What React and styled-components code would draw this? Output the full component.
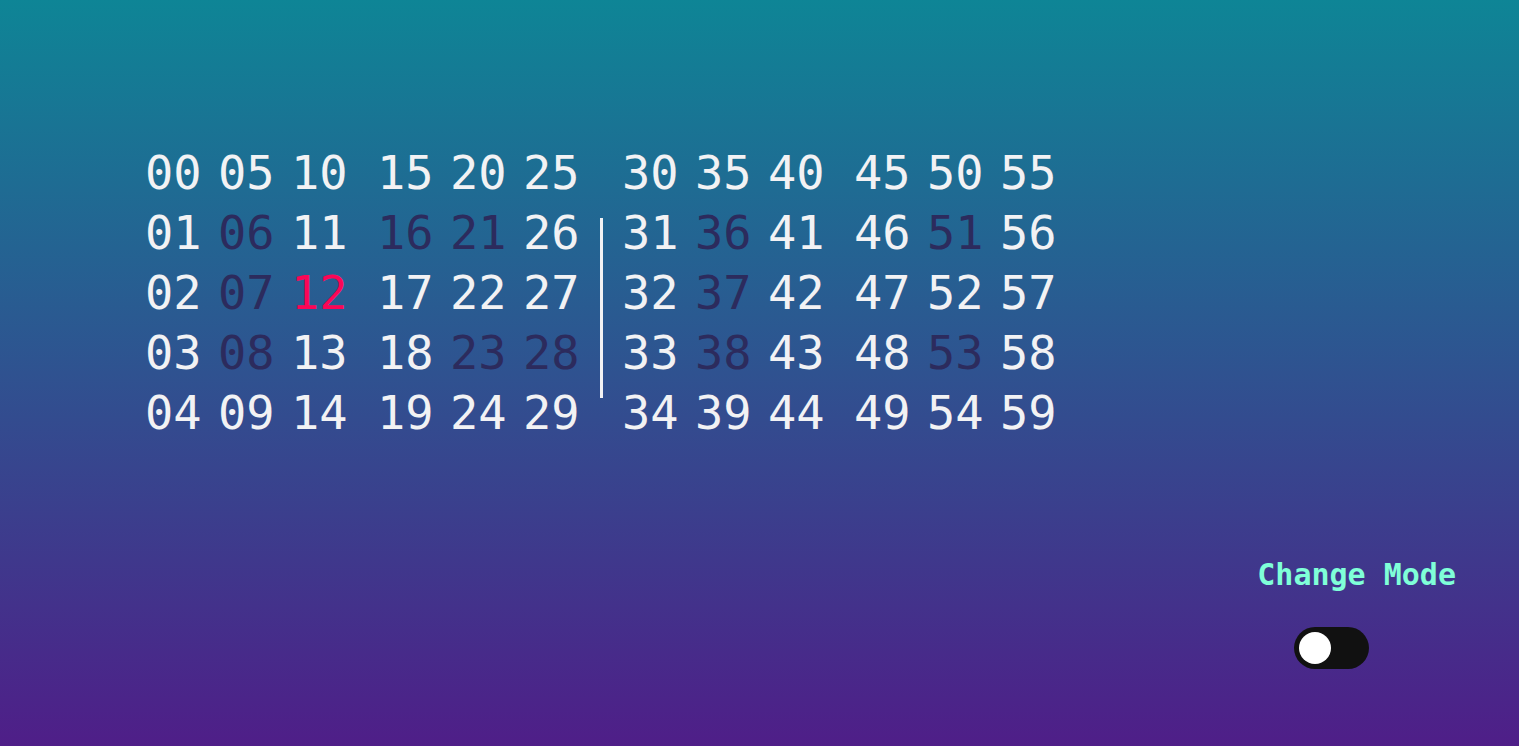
import React, { useState } from 'react';
import styled, { createGlobalStyle } from 'styled-components';

const GlobalStyle = createGlobalStyle`
  html, body {
    margin: 0;
    padding: 0;
  }
  body {
    font-family: "DejaVu Sans Mono", "Liberation Mono", monospace;
    background: linear-gradient(to bottom, #0e8596, #2f5290 50%, #4f1e88);
    min-height: 100vh;
    overflow: hidden;
  }
`;

const Page = styled.div`
  height: 746px;
  display: flex;
  flex-direction: column;
`;

const Clock = styled.div`
  display: flex;
  align-items: flex-start;
  padding: 143px 0 0 145px;
`;

const Half = styled.div`
  display: flex;
  gap: 29px;
`;

const Group = styled.div`
  display: flex;
  gap: 16px;
`;

const Column = styled.div`
  display: flex;
  flex-direction: column;
  width: 57px;
`;

const Cell = styled.span`
  font-size: 47px;
  line-height: 60px;
  height: 60px;
  white-space: nowrap;
  color: ${({ $tone }) =>
    $tone === 'dim' ? '#2c2b5d' : $tone === 'hot' ? '#fb0656' : '#f2f2f4'};
`;

const Divider = styled.div`
  width: 3px;
  height: 180px;
  background: #f2f2f4;
  margin: 75px 19px 0 20px;
`;

const Controls = styled.div`
  align-self: flex-end;
  margin: 114px 63px 0 0;
  display: flex;
  flex-direction: column;
  align-items: flex-start;
`;

const Label = styled.div`
  font-size: 30px;
  font-weight: bold;
  color: #7fffd8;
  line-height: 35px;
`;

const Switch = styled.button`
  margin: 35px 0 0 37px;
  width: 75px;
  height: 42px;
  border: none;
  border-radius: 21px;
  background: #111111;
  padding: 0 5px;
  display: flex;
  align-items: center;
  justify-content: ${({ $on }) => ($on ? 'flex-end' : 'flex-start')};
  cursor: pointer;
`;

const Knob = styled.span`
  width: 32px;
  height: 32px;
  border-radius: 50%;
  background: #ffffff;
`;

const dim = [6, 7, 8, 16, 21, 23, 28, 36, 37, 38, 51, 53];
const hot = [12];

const pad = (n) => String(n).padStart(2, '0');

const toneOf = (n) => (hot.includes(n) ? 'hot' : dim.includes(n) ? 'dim' : 'lit');

const NumColumn = ({ col }) => (
  <Column>
    {[0, 1, 2, 3, 4].map((r) => {
      const n = col * 5 + r;
      return (
        <Cell key={n} $tone={toneOf(n)}>
          {pad(n)}
        </Cell>
      );
    })}
  </Column>
);

const ClockHalf = ({ start }) => (
  <Half>
    <Group>
      {[0, 1, 2].map((i) => (
        <NumColumn key={i} col={start + i} />
      ))}
    </Group>
    <Group>
      {[3, 4, 5].map((i) => (
        <NumColumn key={i} col={start + i} />
      ))}
    </Group>
  </Half>
);

const App = () => {
  const [on, setOn] = useState(false);
  return (
    <Page>
      <GlobalStyle />
      <Clock>
        <ClockHalf start={0} />
        <Divider />
        <ClockHalf start={6} />
      </Clock>
      <Controls>
        <Label>Change Mode</Label>
        <Switch $on={on} onClick={() => setOn(!on)} aria-label="Change Mode">
          <Knob />
        </Switch>
      </Controls>
    </Page>
  );
};

export default App;
